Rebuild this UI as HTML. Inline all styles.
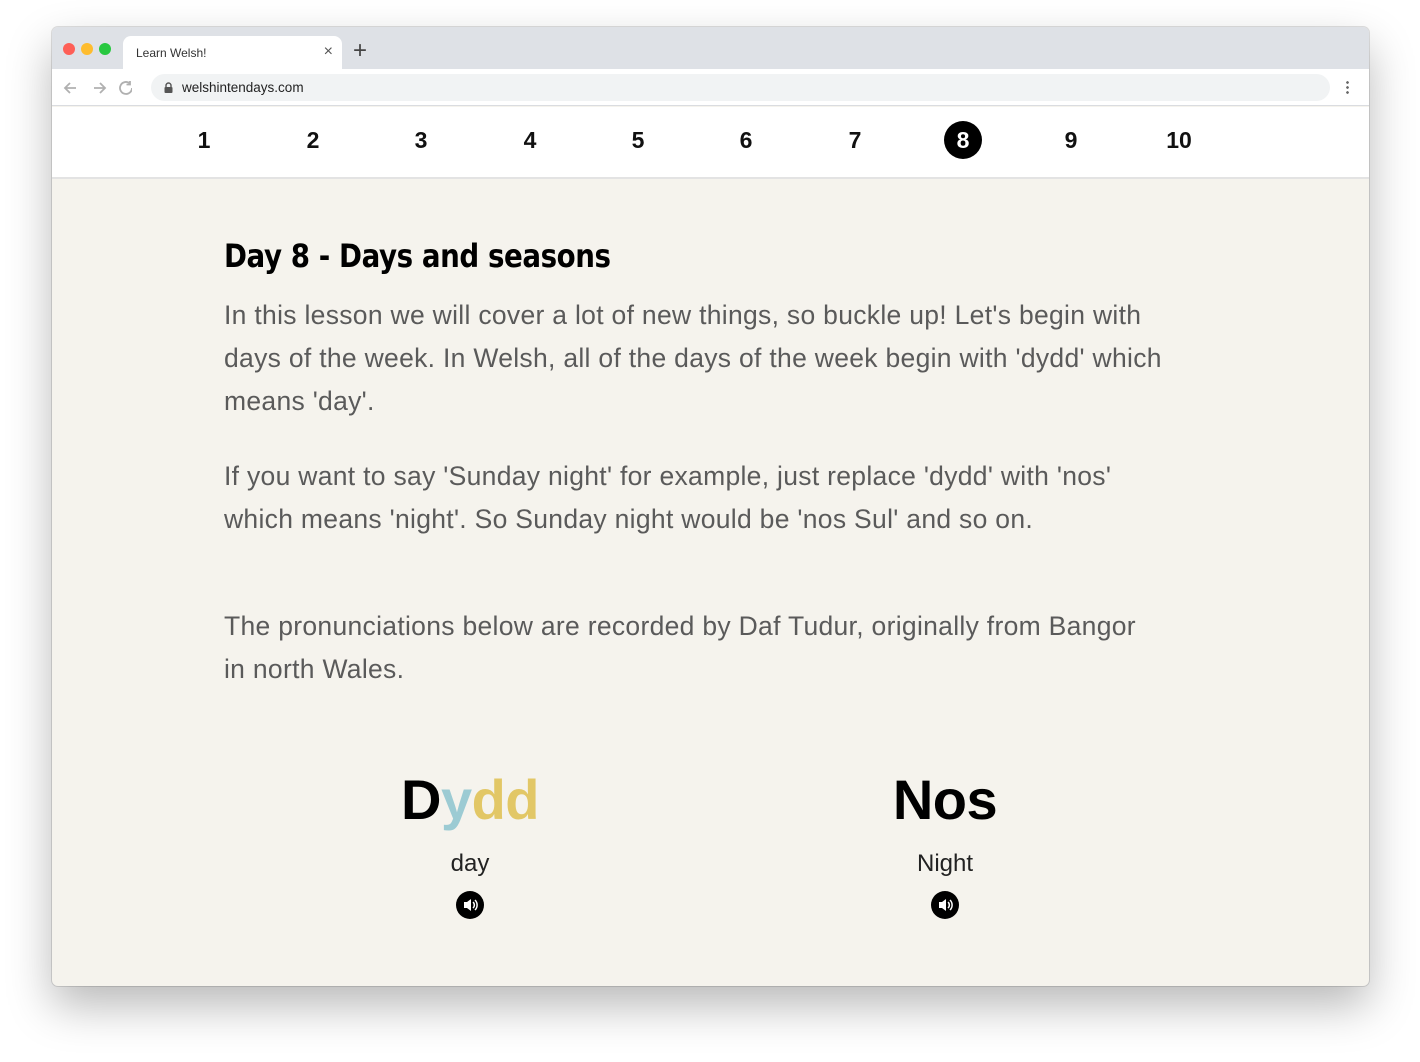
<!DOCTYPE html>
<html><head><meta charset="utf-8"><style>
*{margin:0;padding:0;box-sizing:border-box}
body{width:1420px;height:1062px;background:#fff;position:relative;overflow:hidden;font-family:"Liberation Sans",sans-serif}
.win{position:absolute;left:52px;top:27px;width:1317px;height:959px;border-radius:6px;background:#f5f3ed;box-shadow:0 20px 45px rgba(0,0,0,.28),0 0 0 1px rgba(0,0,0,.12);overflow:hidden}
.tabbar{position:absolute;left:0;top:0;width:100%;height:42px;background:#dee1e6}
.dot{position:absolute;top:16px;width:12px;height:12px;border-radius:50%}
.tab{position:absolute;left:71px;top:9px;width:219px;height:34px;background:#fff;border-radius:8px 8px 0 0;font-size:12px;color:#333;padding:10px 0 0 13px}
.tab .x{position:absolute;right:9px;top:7px;font-size:16px;color:#555}
.plus{position:absolute;left:301px;top:10px;font-size:24px;color:#444;font-weight:300}
.tool{position:absolute;left:0;top:42px;width:100%;height:37px;background:#fff;border-bottom:1px solid #dadce0}
.addr{position:absolute;left:99px;top:5px;width:1179px;height:27px;background:#f1f3f4;border-radius:14px;font-size:13.5px;color:#222;padding:6px 0 0 31px}
.nav{position:absolute;left:0;top:80px;width:100%;height:72px;background:#fff;border-bottom:2px solid #e3e3e3}
.n{position:absolute;top:16px;width:40px;margin-left:-20px;text-align:center;font-size:23px;font-weight:bold;color:#111;line-height:34px}
.n.on{background:#000;color:#fff;border-radius:50%;width:38px;height:38px;margin-left:-19px;top:14px;line-height:38px}
h1{position:absolute;left:172px;top:210px;font-size:32px;font-weight:bold;color:#000;font-family:"DejaVu Sans","Liberation Sans",sans-serif;letter-spacing:-0.5px;transform:scaleX(0.865);transform-origin:left;white-space:nowrap}
.p{position:absolute;left:172px;font-size:26.5px;line-height:43px;color:#5a5a5a;white-space:nowrap;letter-spacing:0.3px}
.big{position:absolute;top:740px;font-size:56px;font-weight:bold;width:300px;margin-left:-150px;text-align:center;letter-spacing:-0.5px}
.sm{position:absolute;top:823px;font-size:24px;color:#222;width:300px;margin-left:-150px;text-align:center}
.spk{position:absolute;top:864px;width:28px;height:28px;margin-left:-14px;border-radius:50%;background:#000}
</style></head><body>
<div class="win">
 <div class="tabbar">
  <div class="dot" style="left:11px;background:#fe5f57"></div>
  <div class="dot" style="left:29px;background:#febc2e"></div>
  <div class="dot" style="left:47px;background:#28c840"></div>
  <div class="tab">Learn Welsh!<span class="x">×</span></div>
  <div class="plus">+</div>
 </div>
 <div class="tool">
  <svg style="position:absolute;left:10px;top:10px" width="70" height="18" viewBox="0 0 70 18" fill="none" stroke="#b0b0b0" stroke-width="1.8">
   <path d="M14 9H3M8 4L3 9l5 5"/><path d="M32 9h11M38 4l5 5-5 5"/><path d="M71 9a6 6 0 1 1-2-4.5M69 2v3.5h-3.5" transform="translate(-1,0)"/>
  </svg>
  <div class="addr"><svg style="position:absolute;left:13px;top:8px" width="9" height="11" viewBox="0 0 9 11"><path d="M2 5V3.5a2.5 2.5 0 0 1 5 0V5" stroke="#555" stroke-width="1.4" fill="none"/><rect x="0.5" y="5" width="8" height="6" rx="1" fill="#555"/></svg>welshintendays.com</div>
  <div style="position:absolute;left:1294px;top:11px;width:3px;height:15px;background:radial-gradient(circle,#666 1.2px,transparent 1.5px) 0 0/3px 5px"></div>
 </div>
 <div class="nav">
  <div class="n" style="left:152px">1</div><div class="n" style="left:261px">2</div><div class="n" style="left:369px">3</div><div class="n" style="left:478px">4</div><div class="n" style="left:586px">5</div><div class="n" style="left:694px">6</div><div class="n" style="left:803px">7</div><div class="n on" style="left:911px">8</div><div class="n" style="left:1019px">9</div><div class="n" style="left:1127px">10</div>
 </div>
 <h1>Day 8 - Days and seasons</h1>
 <div class="p" style="top:267px">In this lesson we will cover a lot of new things, so buckle up! Let's begin with<br>days of the week. In Welsh, all of the days of the week begin with 'dydd' which<br>means 'day'.</div>
 <div class="p" style="top:428px">If you want to say 'Sunday night' for example, just replace 'dydd' with 'nos'<br>which means 'night'. So Sunday night would be 'nos Sul' and so on.</div>
 <div class="p" style="top:578px">The pronunciations below are recorded by Daf Tudur, originally from Bangor<br>in north Wales.</div>
 <div class="big" style="left:418px"><span style="color:#000">D</span><span style="color:#9ccbd3">y</span><span style="color:#e2c766">dd</span></div>
 <div class="big" style="left:893px;color:#000">Nos</div>
 <div class="sm" style="left:418px">day</div>
 <div class="sm" style="left:893px">Night</div>
 <div class="spk" style="left:418px"><svg width="28" height="28" viewBox="0 0 28 28"><path d="M8 11h3l4-3v12l-4-3H8z" fill="#fff"/><path d="M17 11a4 4 0 0 1 0 6M19 9a7 7 0 0 1 0 10" stroke="#fff" stroke-width="1.5" fill="none"/></svg></div>
 <div class="spk" style="left:893px"><svg width="28" height="28" viewBox="0 0 28 28"><path d="M8 11h3l4-3v12l-4-3H8z" fill="#fff"/><path d="M17 11a4 4 0 0 1 0 6M19 9a7 7 0 0 1 0 10" stroke="#fff" stroke-width="1.5" fill="none"/></svg></div>
</div>
</body></html>
